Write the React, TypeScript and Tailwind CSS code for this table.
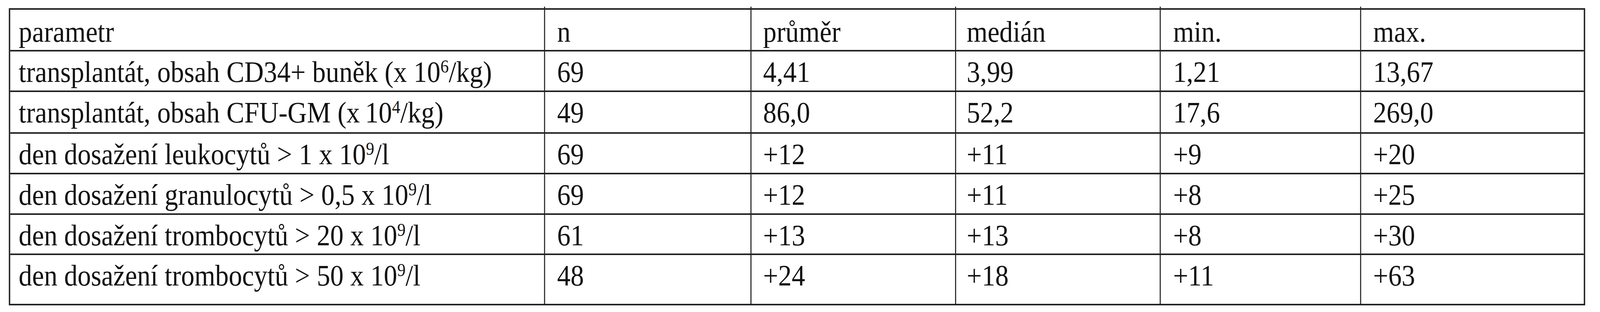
import React from "react";

type Row = {
  label: React.ReactNode;
  values: string[];
  height: string;
};

const cols = "grid grid-cols-[1516px_585px_580px_580px_568px_631px]";
const pads = ["pl-[24px]", "pl-[34px]", "pl-[33px]", "pl-[30px]", "pl-[35px]", "pl-[34px]"];

const header = ["parametr", "n", "průměr", "medián", "min.", "max."];

const rows: Row[] = [
  {
    label: (
      <>
        transplantát, obsah CD34+ buněk (x 10<sup className="text-[0.62em]">6</sup>/kg)
      </>
    ),
    values: ["69", "4,41", "3,99", "1,21", "13,67"],
    height: "h-[104px]",
  },
  {
    label: (
      <>
        transplantát, obsah CFU-GM (x{"\u2009"}10<sup className="text-[0.62em]">4</sup>/kg)
      </>
    ),
    values: ["49", "86,0", "52,2", "17,6", "269,0"],
    height: "h-[107px]",
  },
  {
    label: (
      <>
        den dosažení leukocytů &gt; 1 x 10<sup className="text-[0.62em]">9</sup>/l
      </>
    ),
    values: ["69", "+12", "+11", "+9", "+20"],
    height: "h-[104px]",
  },
  {
    label: (
      <>
        den dosažení granulocytů &gt; 0,5 x 10<sup className="text-[0.62em]">9</sup>/l
      </>
    ),
    values: ["69", "+12", "+11", "+8", "+25"],
    height: "h-[104px]",
  },
  {
    label: (
      <>
        den dosažení trombocytů &gt; 20 x 10<sup className="text-[0.62em]">9</sup>/l
      </>
    ),
    values: ["61", "+13", "+13", "+8", "+30"],
    height: "h-[103px]",
  },
  {
    label: (
      <>
        den dosažení trombocytů &gt; 50 x 10<sup className="text-[0.62em]">9</sup>/l
      </>
    ),
    values: ["48", "+24", "+18", "+11", "+63"],
    height: "h-[125px]",
  },
];

function Cell({ i, children, top }: { i: number; children: React.ReactNode; top: string }) {
  return (
    <div
      className={`${pads[i]} ${top} whitespace-nowrap ${
        i < 5 ? "border-r-[3px] border-[#222]" : ""
      }`}
    >
      {children}
    </div>
  );
}

// the table is laid out for a 4535px wide page; squeeze it horizontally
// when the window is narrower than that
function useFit(width: number) {
  const get = () => (typeof window === "undefined" ? 1 : Math.min(1, window.innerWidth / width));
  const [scale, setScale] = React.useState(get);
  React.useEffect(() => {
    const onResize = () => setScale(get());
    window.addEventListener("resize", onResize);
    return () => window.removeEventListener("resize", onResize);
  }, []);
  return scale;
}

export default function App() {
  const scale = useFit(4535);
  return (
    <div className="w-full h-[800px] overflow-hidden bg-white">
      <div
        className="w-[4535px] text-[#111] text-[76px] leading-[76px] pt-[17px]"
        style={{
          fontFamily: '"Liberation Serif", "Times New Roman", serif',
          transform: `scaleX(${scale})`,
          transformOrigin: "0 0",
        }}
      >
        {/* small ticks above the top rule */}
        <div className={`${cols} w-[4460px] ml-[29px] h-[4px]`}>
          {[0, 1, 2, 3, 4, 5].map((i) => (
            <div key={i} className={i < 5 ? "border-r-[3px] border-[#222]" : ""} />
          ))}
        </div>
        <div className="ml-[25px] w-[4468px] border-4 border-[#222]">
          <div className={`${cols} h-[107px] border-b-4 border-[#222]`}>
            {header.map((h, i) => (
              <Cell key={h} i={i} top="pt-[18px]">
                {h}
              </Cell>
            ))}
          </div>
          {rows.map((r, ri) => (
            <div
              key={ri}
              className={`${cols} ${r.height} ${ri < rows.length - 1 ? "border-b-4 border-[#222]" : ""}`}
            >
              <Cell i={0} top="pt-[14px]">
                {r.label}
              </Cell>
              {r.values.map((v, vi) => (
                <Cell key={vi} i={vi + 1} top="pt-[14px]">
                  {v}
                </Cell>
              ))}
            </div>
          ))}
        </div>
      </div>
    </div>
  );
}
